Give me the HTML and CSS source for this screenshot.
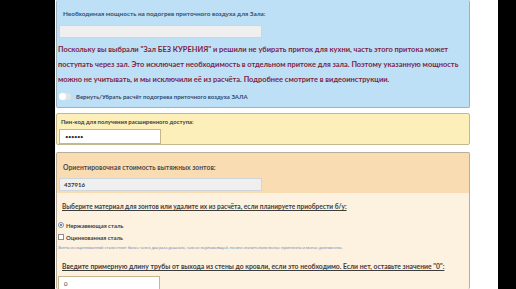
FILE: index.html
```html
<!DOCTYPE html>
<html lang="ru">
<head>
<meta charset="utf-8">
<link rel="stylesheet" href="styles.css">
</head>
<body>
<div class="frame">
  <div class="side side-left"></div>
  <main class="page">
    <section class="panel panel-blue">
      <div class="label label-heat">Необходимая мощность на подогрев приточного воздуха для Зала:</div>
      <div class="field field-grey"></div>
      <p class="warning">Поскольку вы выбрали "Зал БЕЗ КУРЕНИЯ" и решили не убирать приток для кухни, часть этого притока может<br>поступать через зал. Это исключает необходимость в отдельном притоке для зала. Поэтому указанную мощность<br>можно не учитывать, и мы исключили её из расчёта. Подробнее смотрите в видеоинструкции.</p>
      <label class="toggle-row">
        <span class="toggle"><span class="knob"></span></span>
        <span class="toggle-text">Вернуть/Убрать расчёт подогрева приточного воздуха ЗАЛА</span>
      </label>
    </section>

    <section class="panel panel-yellow">
      <div class="label label-small">Пин-код для получения расширенного доступа:</div>
      <div class="field field-white">••••••</div>
    </section>

    <section class="panel panel-orange">
      <div class="orange-head">
        <div class="label label-cost">Ориентировочная стоимость вытяжных зонтов:</div>
        <div class="field field-grey field-value">437916</div>
      </div>
      <div class="orange-body">
        <div class="u-title">Выберите материал для зонтов или удалите их из расчёта, если планируете приобрести б/у:</div>
        <label class="opt"><span class="radio"><span class="dot"></span></span>Нержавеющая сталь</label>
        <label class="opt opt2"><span class="check"></span>Оцинкованная сталь</label>
        <div class="note">Зонты из оцинкованной стали стоят более чем в два раза дешевле, чем из нержавеющей, но они значительно менее практичны и менее долговечны.</div>
        <div class="u-title u-title2">Введите примерную длину трубы от выхода из стены до кровли, если это необходимо. Если нет, оставьте значение "0":</div>
        <div class="field field-white field-zero">0</div>
      </div>
    </section>
  </main>
  <div class="side side-right"></div>
</div>
</body>
</html>
```

FILE: styles.css
```css
html, body {
  margin: 0;
  padding: 0;
  height: 289px;
  overflow: hidden;
  background: #000;
}
body {
  font-family: Lato, "Open Sans", sans-serif;
}
.frame {
  display: flex;
  height: 289px;
}
.side-left { width: 55px; background: #000; flex: none; }
.side-right { width: 18px; background: #000; flex: none; }
.page {
  width: 443px;
  flex: none;
  background: #fff;
  padding-left: 1px;
  box-sizing: border-box;
  display: flex;
  flex-direction: column;
}
.panel {
  width: 414px;
  box-sizing: border-box;
  border: 1px solid #a9b4b8;
  border-radius: 2px;
}
.panel-blue {
  background: #bde0f6;
  border-top: none;
  border-color: #9fb3bf;
  padding: 9px 2px 0 2px;
  height: 108px;
}
.label {
  color: #34506a;
  font-weight: 700;
  white-space: nowrap;
}
.label-heat {
  font-size: 6.4px;
  line-height: 10px;
  padding-left: 4px;
}
.field {
  box-sizing: border-box;
  height: 13px;
  border: 1px solid #cfd6da;
  background: #efefef;
}
.panel-blue .field-grey {
  width: 203px;
  margin-top: 6px;
}
.warning {
  margin: 4px 0 0 -1px;
  color: #7d1f45;
  font-weight: 700;
  font-size: 7.45px;
  line-height: 15px;
  white-space: nowrap;
}
.toggle-row {
  display: flex;
  align-items: center;
  margin-top: 6px;
  gap: 5px;
}
.toggle {
  width: 12px;
  height: 7px;
  border-radius: 4px;
  background: #dfe3e6;
  position: relative;
  flex: none;
}
.knob {
  position: absolute;
  left: 0;
  top: 0;
  width: 7px;
  height: 7px;
  border-radius: 50%;
  background: #fff;
}
.toggle-text {
  font-size: 6px;
  font-weight: 700;
  color: #2f4a73;
  white-space: nowrap;
}
.panel-yellow {
  margin-top: 5px;
  height: 32px;
  background: #fcefb9;
  border-color: #c4b98e;
  padding: 3px 2px 0 2px;
}
.label-small {
  font-size: 5.9px;
  line-height: 9px;
  padding-left: 2px;
  color: #3d3d3d;
}
.field-white {
  background: #fff;
  border: 1px solid #c8b58c;
  width: 102px;
  height: 15px;
  margin-top: 3px;
  font-size: 6px;
  line-height: 13px;
  padding-left: 5px;
  color: #333;
  letter-spacing: -0.5px;
}
.panel-orange {
  margin-top: 7px;
  flex: 1;
  border-color: #b9ad9b;
  border-bottom: none;
  background: #fdf1df;
  overflow: hidden;
}
.orange-head {
  background: #fadcb2;
  height: 40px;
  padding: 9px 2px 0 2px;
  box-sizing: border-box;
}
.label-cost {
  font-size: 6.8px;
  line-height: 10px;
  padding-left: 4px;
  color: #4a4a4a;
}
.field-value {
  width: 203px;
  margin-top: 6px;
  font-size: 6px;
  font-weight: 700;
  line-height: 11px;
  padding-left: 4px;
  color: #333;
}
.orange-body {
  padding: 9px 2px 0 1px;
}
.u-title {
  font-size: 6.52px;
  line-height: 10px;
  font-weight: 700;
  color: #3d3d3d;
  text-decoration: underline;
  white-space: nowrap;
  padding-left: 4px;
}
.opt {
  display: flex;
  align-items: center;
  gap: 2px;
  font-size: 5.9px;
  font-weight: 700;
  color: #3d3d3d;
  margin-top: 9px;
  height: 8px;
}
.opt2 { margin-top: 4px; }
.radio {
  width: 6px;
  height: 6px;
  border: 1px solid #7d8fa3;
  border-radius: 50%;
  background: #fff;
  position: relative;
  box-sizing: border-box;
}
.dot {
  position: absolute;
  left: 1px;
  top: 1px;
  width: 2px;
  height: 2px;
  border-radius: 50%;
  background: #2b5da0;
}
.check {
  width: 6px;
  height: 6px;
  border: 1px solid #8d8d8d;
  background: #fff;
  box-sizing: border-box;
}
.note {
  font-size: 4.1px;
  line-height: 5px;
  color: #6f8fb8;
  margin-top: 4px;
  white-space: nowrap;
}
.u-title2 {
  margin-top: 11px;
  font-size: 6.8px;
}
.field-zero {
  margin-top: 5px;
  font-size: 6px;
  letter-spacing: 0;
}
```
